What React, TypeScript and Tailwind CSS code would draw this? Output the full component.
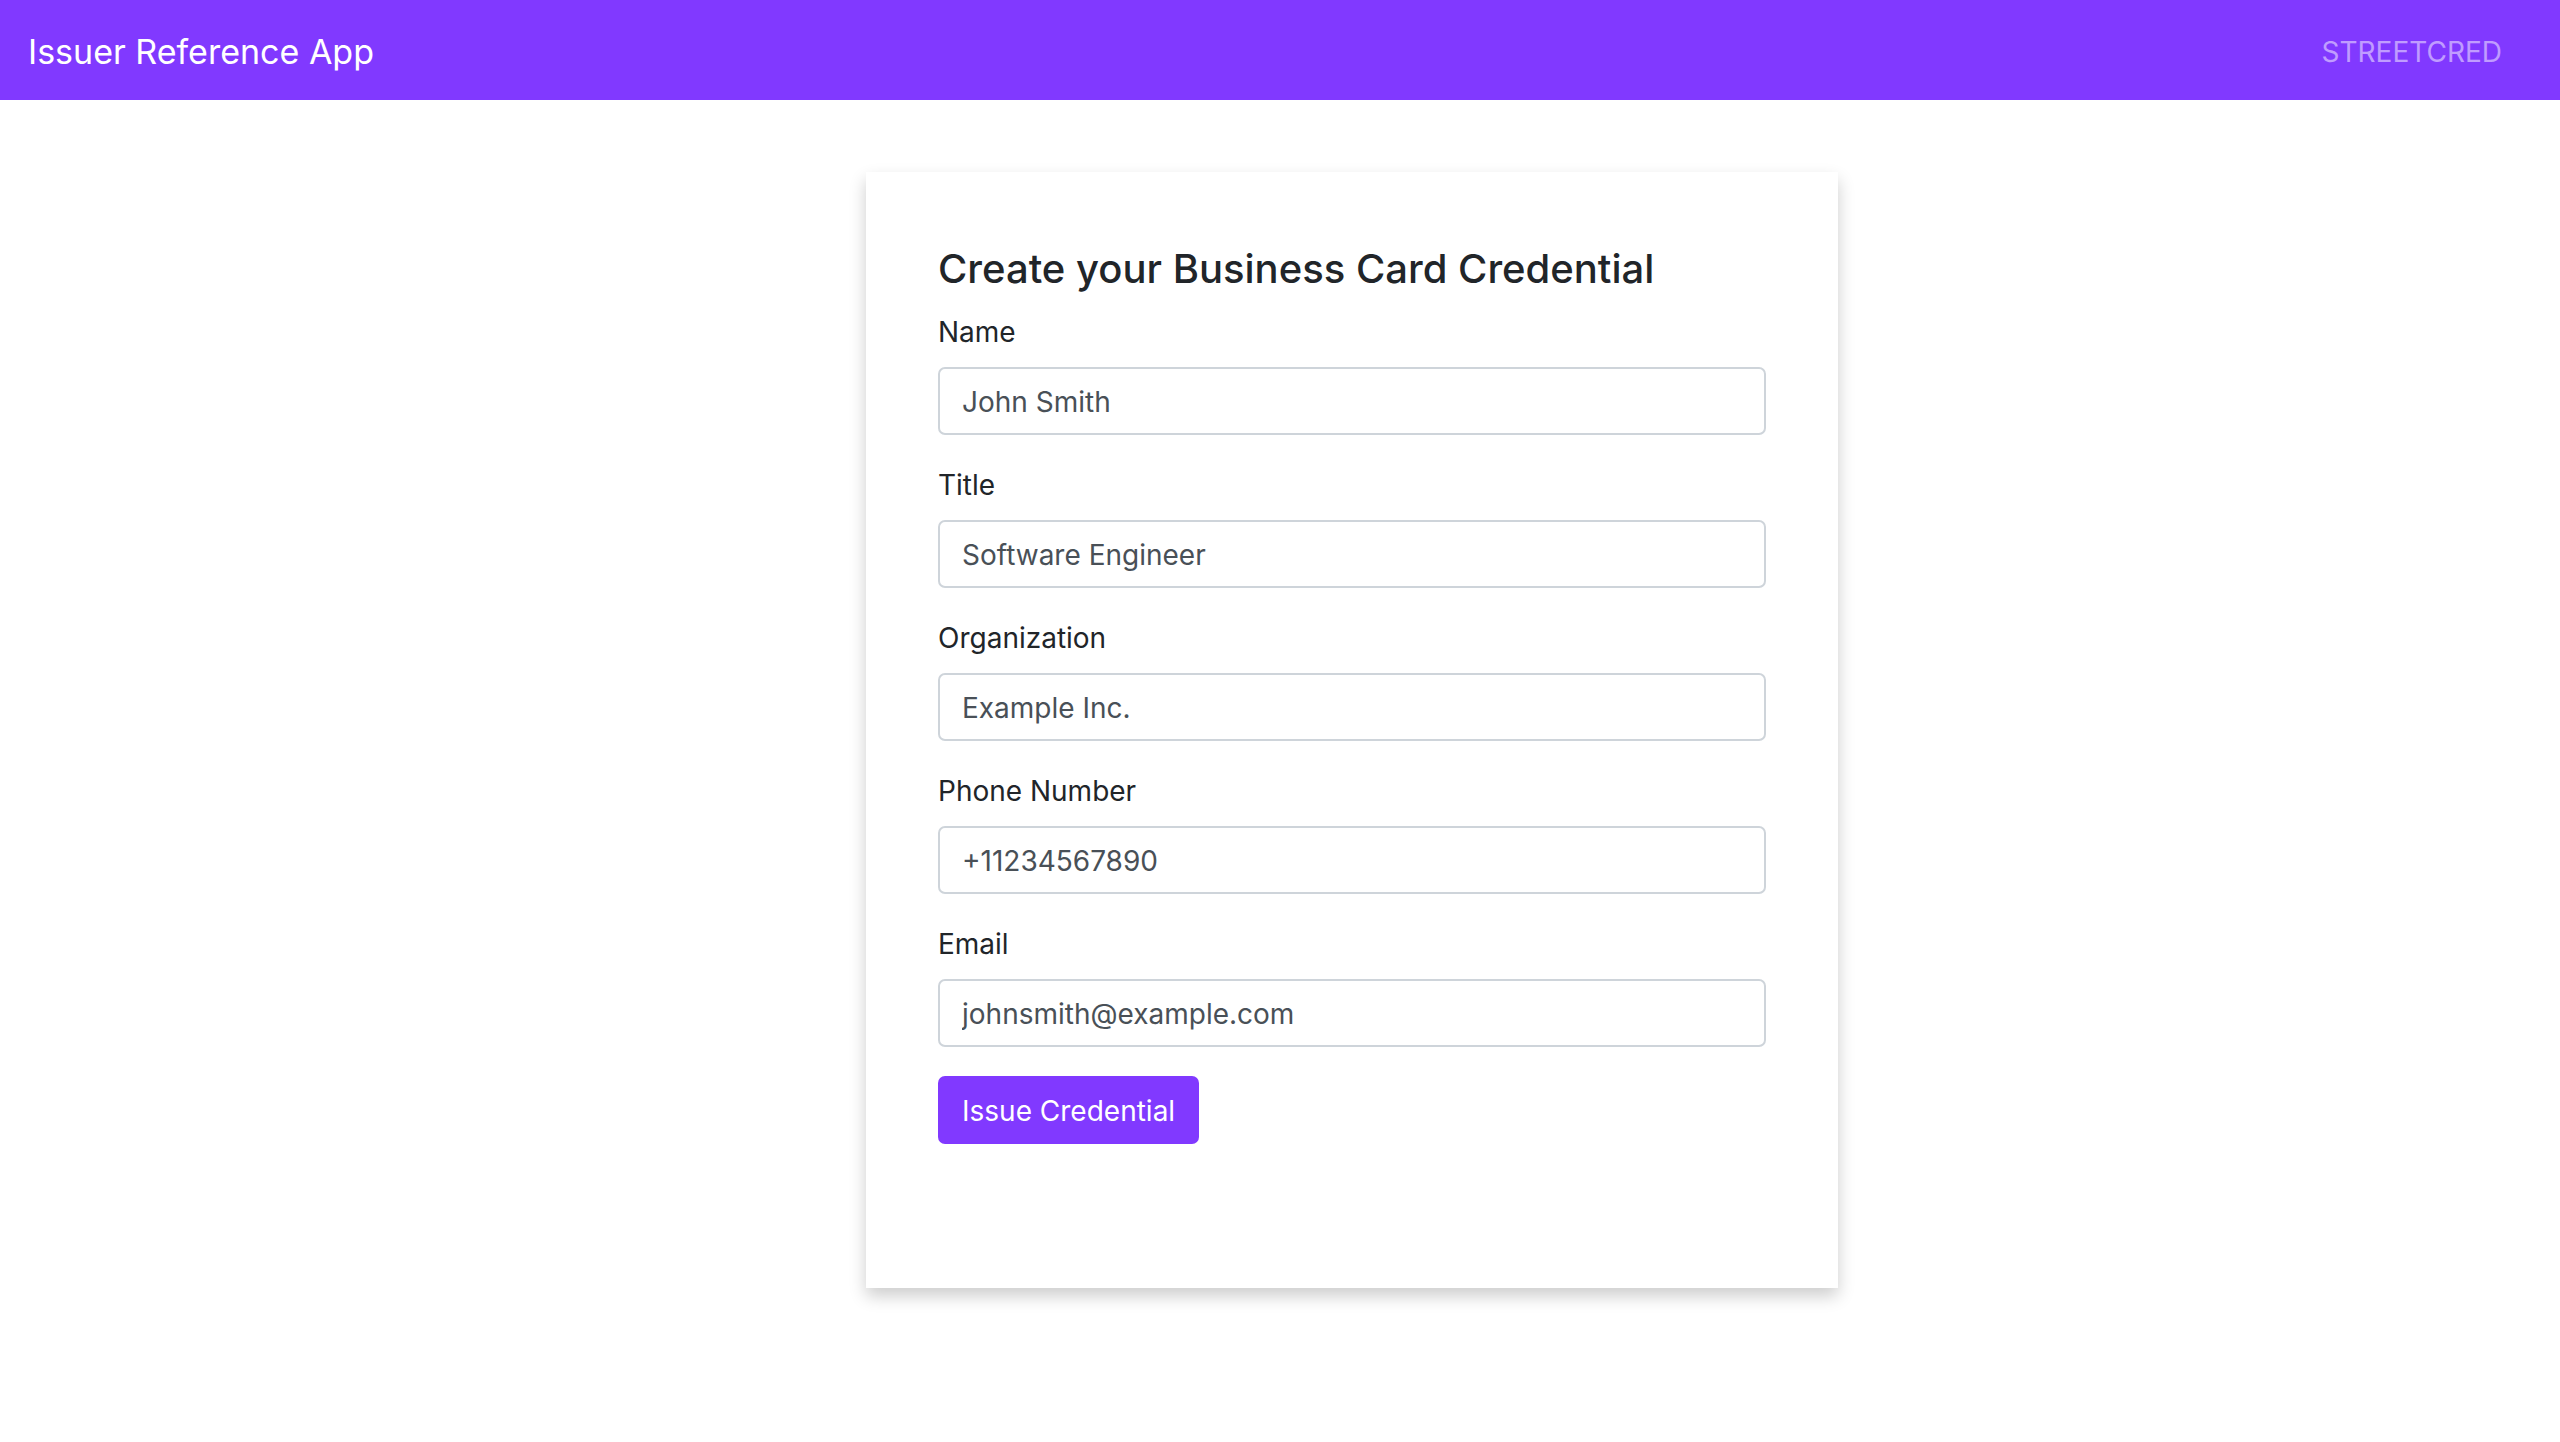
type Field = {
  id: string;
  label: string;
  type: string;
  value: string;
};

const fields: Field[] = [
  { id: "name", label: "Name", type: "text", value: "John Smith" },
  { id: "title", label: "Title", type: "text", value: "Software Engineer" },
  { id: "organization", label: "Organization", type: "text", value: "Example Inc." },
  { id: "phone", label: "Phone Number", type: "tel", value: "+11234567890" },
  { id: "email", label: "Email", type: "email", value: "johnsmith@example.com" },
];

function Navbar() {
  return (
    <header className="flex items-center justify-between bg-[#8139ff] pt-[26px] pr-[58px] pb-[22px] pl-7">
      <a href="#" className="text-[34px] leading-[52px] text-white">
        Issuer Reference App
      </a>
      <nav>
        <a href="#" className="text-[28px] leading-[42px] text-white/50">
          STREETCRED
        </a>
      </nav>
    </header>
  );
}

function FormField({ id, label, type, value }: Field) {
  return (
    <div className="mb-[29px]">
      <label htmlFor={id} className="mb-3.5 block leading-[42px]">
        {label}
      </label>
      <input
        id={id}
        name={id}
        type={type}
        defaultValue={value}
        className="block h-[68px] w-full rounded-[7px] border-2 border-[#ced4da] bg-white px-[22px] pt-0.5 text-[28px] text-[#495057] outline-none"
      />
    </div>
  );
}

export default function App() {
  return (
    <div className="min-h-screen bg-white font-[Inter,sans-serif] text-[28px] text-[#212529]">
      <Navbar />
      <main className="flex justify-center pt-[72px] pb-[72px] pl-36">
        <section className="w-full max-w-[972px] bg-white px-[72px] pt-[72px] pb-36 shadow-[0_8px_16px_0_rgba(0,0,0,0.2)]">
          <h1 className="mb-[17px] text-[40px] leading-[50px] font-medium">
            Create your Business Card Credential
          </h1>
          <form onSubmit={(event) => event.preventDefault()}>
            {fields.map((field) => (
              <FormField key={field.id} {...field} />
            ))}
            <button
              type="submit"
              className="block h-[68px] rounded-[7px] bg-[#8139ff] px-6 pt-0.5 text-[28px] text-white"
            >
              Issue Credential
            </button>
          </form>
        </section>
      </main>
    </div>
  );
}
